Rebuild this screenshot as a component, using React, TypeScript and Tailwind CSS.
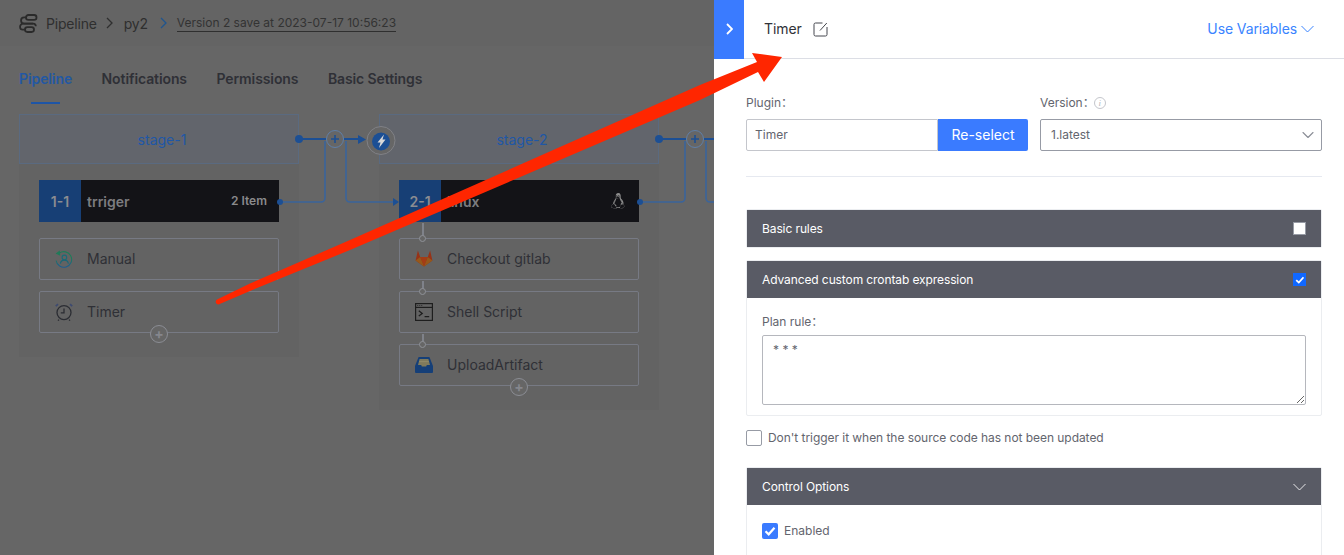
import { ChevronDown } from 'lucide-react'
import { FaLinux } from 'react-icons/fa'
import type { ReactNode } from 'react'

const PipelineLogo = () => (
  <svg width="19" height="19" viewBox="0 0 19 19" fill="none" stroke="#2a2a2a" strokeWidth="1.800">
    <rect x="7" y="1" width="10.500" height="4.800" rx="2.400" />
    <rect x="6" y="13.200" width="9" height="4.800" rx="2.400" />
    <path d="M8 3.400H5.200a3 3 0 0 0 0 6.300h9a2.600 2.600 0 0 1 2.600 2.600" />
    <path d="M14 9.700H4a2.900 2.900 0 0 0-2.900 2.900v.6A2.600 2.600 0 0 0 3.700 15.600H7" />
  </svg>
)

const Chevron = ({ color, width = 1.3 }: { color: string; width?: number }) => (
  <svg width="7" height="12" viewBox="0 0 7 12" fill="none" stroke={color} strokeWidth={width} className="shrink-0">
    <path d="M1 1l5 5-5 5" />
  </svg>
)

const ManualIcon = () => (
  <svg width="18" height="18" viewBox="0 0 18 18" fill="none" strokeWidth="1.100">
    <defs>
      <linearGradient id="manual" x1="0" y1="0" x2="0" y2="1">
        <stop offset="0.400" stopColor="#1f7a58" />
        <stop offset="1" stopColor="#1b5c92" />
      </linearGradient>
    </defs>
    <path d="M4.200 3.200A7.800 7.800 0 1 1 1.100 10.500" stroke="url(#manual)" />
    <path d="M.6 3.400 4.800.6l.4 5.200z" fill="#1f7a58" />
    <circle cx="9.400" cy="7.400" r="2.300" stroke="#1a6c78" />
    <path d="M5.400 13.600c.3-2.300 2-3.500 4-3.500s3.700 1.200 4 3.500" stroke="#1a6878" />
  </svg>
)

const TimerIcon = () => (
  <svg width="18" height="18" viewBox="0 0 18 18" fill="none" stroke="#2b2d33" strokeWidth="1.300">
    <circle cx="9" cy="9.600" r="7" />
    <path d="M9 5.600v4.200H5.800" />
    <path d="M.8 3.200 3 1.200M17.200 3.200 15 1.200" stroke="#3d4a70" strokeWidth="1.800" />
    <path d="M4 16.600 3 17.600M14 16.600l1 1" />
  </svg>
)

const GitlabIcon = () => (
  <svg width="18" height="17" viewBox="0 0 18 17">
    <path d="M9 16.600.6 10.400 2.900.6l2.300 6.300h7.600L15.100.6l2.300 9.800z" fill="#983216" />
    <path d="M9 16.600 5.200 6.900h7.600z" fill="#a33c16" />
    <path d="M9 16.600.6 10.400l4.600-3.500zM9 16.600l8.400-6.200-4.600-3.500z" fill="#96581b" />
  </svg>
)

const ShellIcon = () => (
  <svg width="18" height="18" viewBox="0 0 18 18" fill="none" stroke="#1e1e1e" strokeWidth="1.200">
    <rect x=".6" y=".6" width="16.800" height="16.800" />
    <path d="M.6 4.400h16.800" />
    <path d="M2.400 2.500h.8M4.400 2.500h.8M6.400 2.500h.8" />
    <path d="m3.800 7.800 3.400 2.600-3.400 2.600M9.600 13.600h4.600" strokeWidth="1.300" />
  </svg>
)

const UploadIcon = () => (
  <svg width="18" height="16" viewBox="0 0 18 16">
    <path d="M3.600 0h10.800L18 9v6a1 1 0 0 1-1 1H1a1 1 0 0 1-1-1V9z" fill="#153f78" />
    <path d="M4.600 2h8.800l1.600 6h-3.200l-.6 1.600H6.800L6.200 8H3z" fill="#7f7a5c" />
    <path d="M4.200 4.600h9.600" stroke="#918b69" strokeWidth="1" />
  </svg>
)

const StageHead = ({ name }: { name: string }) => (
  <div className="flex h-[50px] items-center justify-center border border-[#5a6a80] bg-[#62656c] pl-[6px] text-[14px] text-[#1f57a6]">
    {name}
  </div>
)

const AddBadge = () => (
  <div className="absolute bottom-[-11px] left-1/2 flex size-[18px] -translate-x-1/2 items-center justify-center rounded-full border border-[#8b8d94] bg-[#666666] text-[14px] font-bold leading-none text-[#85878d]">
    +
  </div>
)

const Task = ({
  icon,
  name,
  link,
  add,
}: {
  icon: ReactNode
  name: string
  link?: number
  add?: boolean
}) => (
  <div className="relative flex h-[42px] items-center rounded-[2px] border border-[#777a84] pb-[1px] pl-[15px] text-[14px] text-[#2f3036]">
    <span className="flex w-[32px] items-center">{icon}</span>
    {name}
    {link ? (
      <>
        <span className="absolute left-[22px] top-0 w-[2px] -translate-y-full bg-[#7f828a]" style={{ height: link }} />
        <span className="absolute left-[19px] top-[-4px] size-[7px] rounded-full border-[1.5px] border-[#8f9197] bg-[#666666]" />
      </>
    ) : null}
    {add ? <AddBadge /> : null}
  </div>
)

const Job = ({ index, name, right }: { index: string; name: string; right: ReactNode }) => (
  <div className="flex h-[42px] items-center bg-[#131317] font-semibold">
    <span className="flex h-full w-[42px] items-center justify-center bg-[#173f75] text-[14px] text-[#8a8c91]">{index}</span>
    <span className="ml-[6px] flex-1 text-[14px] text-[#7c7c7f]">{name}</span>
    {right}
  </div>
)

const Connectors = () => (
  <svg className="absolute left-0 top-0" width="714" height="420" fill="none">
    {[0, 360].map((dx) => (
      <g key={dx} transform={`translate(${dx} 0)`}>
        <path d="M280 202H321a4 4 0 0 0 4-4V141M346 141V198a4 4 0 0 0 4 4H393" stroke="#3a649c" strokeWidth="1.600" />
        <circle cx="299" cy="139" r="4" fill="#1c4f94" />
        <circle cx="280" cy="202" r="3" fill="#1c4f94" />
        <path d="M299 139H326M344 139H360" stroke="#1c4f94" strokeWidth="2" />
        <path d="M393 198l6 4-6 4z" fill="#1c4f94" />
        <circle cx="335" cy="139" r="8.500" fill="#666666" stroke="#5f7fa8" />
        <path d="M331 139h8M335 135v8" stroke="#1c4f94" strokeWidth="1.600" />
      </g>
    ))}
    <path d="M358 135l8 4.500-8 4.500z" fill="#1c4f94" />
    <circle cx="381" cy="140.500" r="14" fill="#666666" stroke="#808186" />
    <circle cx="381" cy="141.500" r="9" fill="#1c4f94" />
    <path d="M384 134.500l-6.500 8h3l-1.500 5.500 6.500-8.500h-3z" fill="#d8d8d8" />
  </svg>
)

const Pipeline = () => (
  <div className="flex h-full w-[714px] flex-col">
    <div className="flex h-[46px] items-center bg-[#646464] pl-[19px] text-[14px] text-[#2f2f2f]">
      <PipelineLogo />
      <span className="ml-[8px] tracking-[-0.2px]">Pipeline</span>
      <span className="ml-[9px]">
        <Chevron color="#2f2f2f" />
      </span>
      <span className="ml-[11px] tracking-[-0.2px]">py2</span>
      <span className="ml-[12px]">
        <Chevron color="#1f558f" />
      </span>
      <span className="ml-[10px] border-b border-[#2f2f2f] text-[12px] leading-[16px] text-[#333]">Version 2 save at 2023-07-17 10:56:23</span>
    </div>
    <div className="flex h-[58px] gap-[29.5px] pl-[19px] pt-[23px] text-[14px] font-semibold leading-[20px] tracking-[-0.1px] text-[#2f3036]">
      <span className="relative text-[#2358a3]">
        Pipeline
        <span className="absolute left-[12px] top-[33px] h-[2px] w-[29px] bg-[#1e55a6]" />
      </span>
      <span>Notifications</span>
      <span>Permissions</span>
      <span>Basic Settings</span>
    </div>
    <div className="flex gap-[80px] pl-[19px] pt-[10px]">
      <div className="h-[243px] w-[280px] bg-[#636363]">
        <StageHead name="stage-1" />
        <div className="px-[20px] pt-[16px]">
          <Job index="1-1" name="trriger" right={<span className="pr-[12px] text-[12px] text-[#8a8a8c]">2 Item</span>} />
          <div className="mt-[16px] flex flex-col gap-[11px]">
            <Task icon={<ManualIcon />} name="Manual" />
            <Task icon={<TimerIcon />} name="Timer" add />
          </div>
        </div>
      </div>
      <div className="h-[296px] w-[280px] bg-[#636363]">
        <StageHead name="stage-2" />
        <div className="px-[20px] pt-[16px]">
          <Job index="2-1" name="linux" right={<FaLinux className="mr-[13px] text-[#8c8c8c]" size={16} />} />
          <div className="mt-[16px] flex flex-col gap-[11px]">
            <Task icon={<GitlabIcon />} name="Checkout gitlab" link={16} />
            <Task icon={<ShellIcon />} name="Shell Script" link={11} />
            <Task icon={<UploadIcon />} name="UploadArtifact" link={11} add />
          </div>
        </div>
      </div>
    </div>
  </div>
)

const Check = ({ className }: { className: string }) => (
  <span className={`flex items-center justify-center ${className}`}>
    <svg viewBox="0 0 12 12" className="size-[75%]" fill="none" stroke="#fff" strokeWidth="2.200">
      <path d="M1.500 6.200 4.700 9.300 10.500 2.800" />
    </svg>
  </span>
)

const SectionHead = ({ title, children }: { title: string; children: ReactNode }) => (
  <div className="flex h-[37px] items-center justify-between bg-[#595b65] px-[15px] text-[12px] tracking-[-0.1px] text-white">
    <span>{title}</span>
    {children}
  </div>
)

const Panel = () => (
  <div className="absolute bottom-0 right-0 top-0 w-[630px] overflow-hidden bg-white text-[12px] text-[#63656e]">
    <div className="flex h-[59px] items-center border-b border-[#dcdee5]">
      <div className="flex h-[59px] w-[30px] items-center justify-center bg-[#3a7bff]">
        <Chevron color="#ffffff" width={1.8} />
      </div>
      <span className="ml-[20px] pb-[1px] text-[14px] tracking-[-0.1px] text-[#313238]">Timer</span>
      <svg className="ml-[11px]" width="15" height="15" viewBox="0 0 15 15" fill="none" stroke="#45474e" strokeWidth="1">
        <path d="M9.500 1H2.500A1.500 1.500 0 0 0 1 2.500v10A1.500 1.500 0 0 0 2.500 14h10a1.500 1.500 0 0 0 1.500-1.500V5" />
        <path d="M13.800 1 7 8.500" />
      </svg>
      <span className="ml-auto flex items-center gap-[4px] pb-[1px] pr-[30px] text-[14px] tracking-[-0.1px] text-[#3a84ff]">
        Use Variables
        <svg width="13" height="8" viewBox="0 0 13 8" fill="none" stroke="#3a84ff">
          <path d="M.500 1 6.500 7 12.500 1" />
        </svg>
      </span>
    </div>
    <div className="pl-[32px] pr-[22px] pt-[36px]">
      <div className="flex gap-[12px]">
        <div className="w-[282px]">
          <div className="h-[16px] leading-[16px]">Plugin：</div>
          <div className="mt-[8px] flex h-[32px]">
            <div className="flex flex-1 items-center rounded-l-[2px] border border-[#c4c6cc] pl-[8px]">Timer</div>
            <div className="flex w-[90px] items-center justify-center rounded-r-[2px] bg-[#3a7bff] pb-[2px] text-[14px] text-white">Re-select</div>
          </div>
        </div>
        <div className="flex-1">
          <div className="flex h-[16px] items-center leading-[16px]">
            Version：
            <span className="-ml-[1px] flex size-[12px] items-center justify-center rounded-full border border-[#c4c6cc] font-['Liberation_Serif',serif] text-[9px] italic text-[#b5b7bd]">i</span>
          </div>
          <div className="mt-[8px] flex h-[32px] items-center justify-between rounded-[2px] border border-[#979ba5] pl-[10px] pr-[3px]">
            1.latest
            <ChevronDown size={20} strokeWidth={1.300} className="text-[#8a8d96]" />
          </div>
        </div>
      </div>
      <div className="mt-[25px] h-px bg-[#e6e9f0]" />
      <div className="mt-[32px] rounded-[2px] border border-[#ebedf0]">
        <SectionHead title="Basic rules">
          <span className="size-[13px] border border-[#979ba5] bg-white" />
        </SectionHead>
      </div>
      <div className="mt-[12px] rounded-[2px] border border-[#ebedf0]">
        <SectionHead title="Advanced custom crontab expression">
          <Check className="size-[13px] bg-[#1068ff]" />
        </SectionHead>
        <div className="px-[15px] pb-[10px] pt-[16px]">
          <div className="h-[16px] leading-[16px]">Plan rule：</div>
          <textarea
            readOnly
            defaultValue="* * *"
            className="mt-[5px] block h-[70px] w-full rounded-[2px] border border-[#b5b7bd] px-[10px] py-[5px] text-[12px] leading-[18px] text-[#63656e] outline-none"
          />
        </div>
      </div>
      <div className="mt-[13px] flex items-center gap-[6px] tracking-[-0.05px]">
        <span className="size-[16px] rounded-[2px] border border-[#979ba5]" />
        Don't trigger it when the source code has not been updated
      </div>
      <div className="mt-[20px] rounded-[2px] border border-[#ebedf0]">
        <SectionHead title="Control Options">
          <svg width="13" height="8" viewBox="0 0 13 8" fill="none" stroke="#e8e8ea">
            <path d="M.500 1 6.500 7 12.500 1" />
          </svg>
        </SectionHead>
        <div className="flex items-center gap-[6px] px-[15px] pb-[30px] pt-[17px]">
          <Check className="size-[16px] rounded-[2px] bg-[#3a7bff]" />
          Enabled
        </div>
      </div>
    </div>
  </div>
)

const RedArrow = () => (
  <svg className="absolute left-0 top-0" width="1344" height="555">
    <path
      d="M217 299.500 250 283.500 350 240 700 85 757 62 752 53 782 57 764 82 758 72 700 100 350 250 250 291 218.500 304.500A2.700 2.700 0 0 1 217 299.500Z"
      fill="#ff2600"
    />
  </svg>
)

export default function App() {
  return (
    <div className="relative h-[555px] w-[1344px] overflow-hidden bg-[#666666] font-['Inter','Noto_Sans_CJK_SC',sans-serif]">
      <Pipeline />
      <Connectors />
      <Panel />
      <RedArrow />
    </div>
  )
}
